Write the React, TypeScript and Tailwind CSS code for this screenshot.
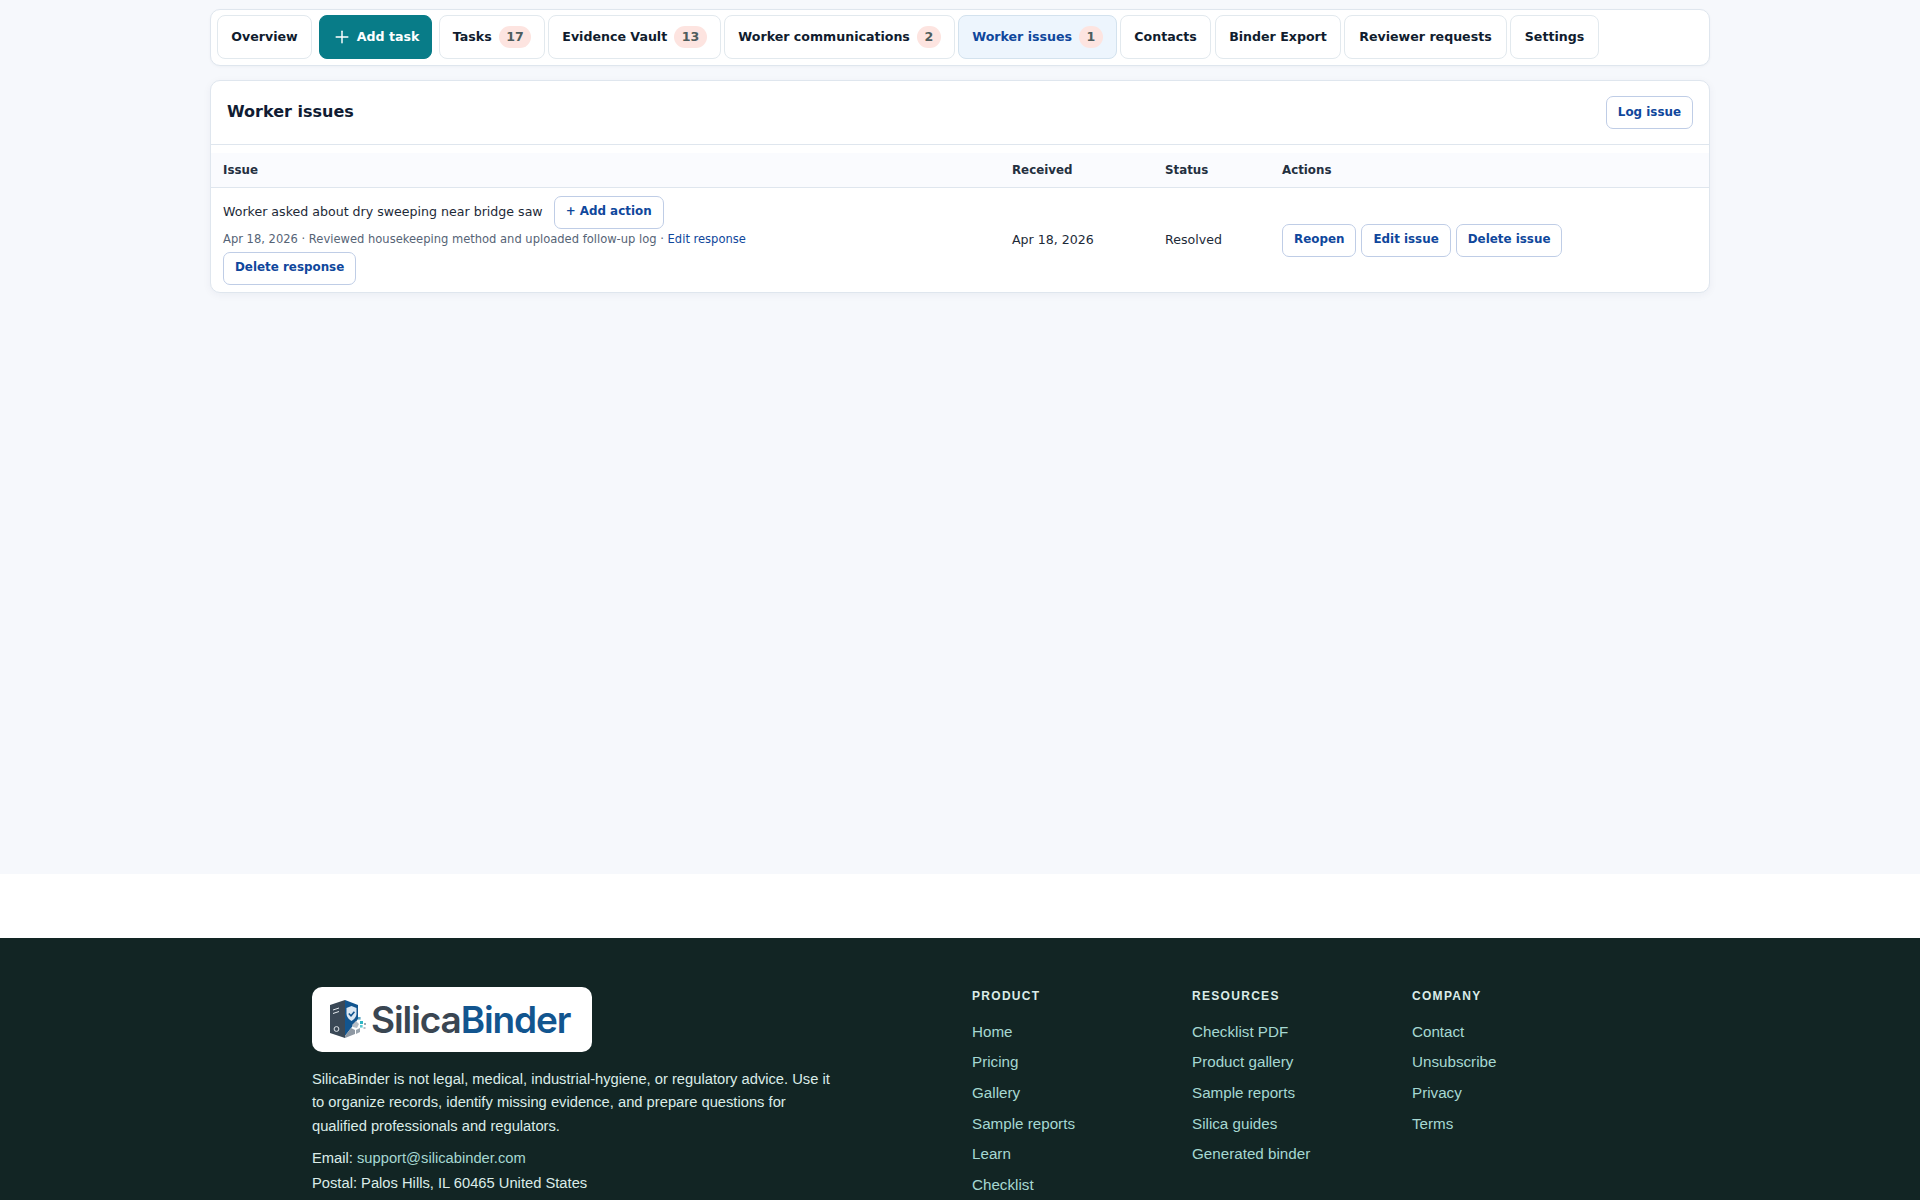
import { Plus } from "lucide-react";

const dejavu = "font-['DejaVu_Sans',sans-serif]";

const tabs = [
  { label: "Overview", w: "w-[95px]", mr: "mr-[7px]" },
  { label: "Add task", w: "w-[113px]", mr: "mr-[7px]", primary: true },
  { label: "Tasks", count: 17, w: "w-[106px]", mr: "mr-[3px]" },
  { label: "Evidence Vault", count: 13, w: "w-[173px]", mr: "mr-[3px]" },
  { label: "Worker communications", count: 2, w: "w-[231px]", mr: "mr-[3px]" },
  { label: "Worker issues", count: 1, w: "w-[159px]", mr: "mr-[3px]", active: true },
  { label: "Contacts", w: "w-[91px]", mr: "mr-[4px]" },
  { label: "Binder Export", w: "w-[126px]", mr: "mr-[3px]" },
  { label: "Reviewer requests", w: "w-[163px]", mr: "mr-[3px]" },
  { label: "Settings", w: "w-[89px]", mr: "" },
];

const footerCols = [
  { title: "PRODUCT", links: ["Home", "Pricing", "Gallery", "Sample reports", "Learn", "Checklist"] },
  { title: "RESOURCES", links: ["Checklist PDF", "Product gallery", "Sample reports", "Silica guides", "Generated binder"] },
  { title: "COMPANY", links: ["Contact", "Unsubscribe", "Privacy", "Terms"] },
];

function OutlineButton({ children, className = "" }: { children: React.ReactNode; className?: string }) {
  return (
    <button className={`h-[33px] px-[11px] rounded-[7px] border border-[#bfcde6] bg-white text-[11.9px] font-bold text-[#0f479c] pb-[1px] whitespace-nowrap ${className}`}>
      {children}
    </button>
  );
}

function LogoMark() {
  return (
    <svg width="36" height="40" viewBox="0 0 36 40" className="shrink-0">
      {/* spine */}
      <path d="M0 5 L15 0 L15 38 L0 33 Z" fill="#3a4856" />
      <path d="M3 10 L9 8 M3 13.5 L9 11.5" stroke="#e6ebf0" strokeWidth="1" />
      <circle cx="6.5" cy="29" r="2.4" fill="none" stroke="#dfe5ea" strokeWidth="1" />
      {/* cover */}
      <path d="M15 0 L28 5 L28 19 L15 36 Z" fill="#12558f" />
      <path d="M21.5 6 L26.5 8 L26.5 13.5 C26.5 17 24 19.5 21.5 21 C19 19.5 16.5 17 16.5 13.5 L16.5 8 Z" fill="#dbe7f2" />
      <path d="M18.8 13.5 L21 15.8 L24.4 11.8" fill="none" stroke="#12558f" strokeWidth="1.6" />
      {/* silica grains */}
      <path d="M15 36 L21 28 L25 30 L25 34 L15 38 Z" fill="#8e98a3" />
      <path d="M22 25 L26 21 L29 24 L27 28 L23 27 Z" fill="#b6bdc5" />
      <path d="M26 30 L30 28 L30 32 L26 34 Z" fill="#9aa4ae" />
      <rect x="28" y="17" width="2.6" height="2.6" fill="#5fa8c4" />
      <rect x="30" y="21" width="3" height="3" fill="#2fb6c4" />
      <rect x="30" y="25" width="2.6" height="2.6" fill="#5cc8d2" />
      <rect x="34" y="23" width="2" height="2" fill="#9fa9b3" />
      <rect x="33.5" y="27" width="2" height="2" fill="#b7bfc7" />
    </svg>
  );
}

export default function App() {
  return (
    <div className="h-[1200px] overflow-hidden bg-white">
      {/* Workspace */}
      <main className={`h-[874px] bg-[#f6f8fc] pt-[9px] ${dejavu}`}>
        <div className="mx-auto w-[1500px]">
          <nav className="h-[57px] rounded-[10px] border border-[#dfe6ee] bg-white flex items-start pt-[5px] pl-[6px] mb-[14px] shadow-[0_1px_3px_rgba(20,40,70,0.04)]">
            {tabs.map((t) => (
              <div
                key={t.label}
                className={`h-[44px] shrink-0 rounded-[8px] border flex items-center justify-center gap-[6px] text-[12.6px] font-bold ${t.w} ${t.mr} ${
                  t.primary
                    ? "bg-[#087c88] border-[#087c88] text-white"
                    : t.active
                      ? "bg-[#edf5fd] border-[#d3e2ee] text-[#0f479c]"
                      : "bg-white border-[#e2e9ee] text-[#101c2e]"
                }`}
              >
                {t.primary && <Plus size={20} strokeWidth={1.75} className="-mr-[1px]" />}
                <span>{t.label}</span>
                {t.count !== undefined && (
                  <span className="min-w-[23px] h-[22px] px-[7.5px] rounded-full bg-[#fde4e0] text-[#4d5c5c] flex items-center justify-center ml-[1px]">
                    {t.count}
                  </span>
                )}
              </div>
            ))}
          </nav>

          <section className="rounded-[10px] border border-[#dfe6ee] bg-white shadow-[0_2px_8px_rgba(20,40,70,0.05)] overflow-hidden">
            <div className="h-[64px] flex items-center justify-between pl-[16px] pr-[16px] border-b border-[#dfe6ee]">
              <h2 className="text-[16px] font-bold text-[#101c33] pb-[2px]">Worker issues</h2>
              <OutlineButton className="pt-[1px] pb-0">Log issue</OutlineButton>
            </div>
            <table className="w-full table-fixed border-collapse mt-[8px]">
              <thead>
                <tr className="h-[34px] bg-[#fafbfe] border-b border-[#dfe6ee] text-left text-[11.84px] font-bold text-[#24303f]">
                  <th className="w-[788px] pl-[12px] pt-[2px]">Issue</th>
                  <th className="w-[153px] pl-[13px] pt-[2px]">Received</th>
                  <th className="w-[117px] pl-[13px] pt-[2px]">Status</th>
                  <th className="pl-[13px] pt-[2px]">Actions</th>
                </tr>
              </thead>
              <tbody>
                <tr className="h-[105px] text-[12.6px] text-[#1d2a38]">
                  <td className="pl-[12px] align-top pt-[8px]">
                    <div className="flex items-center gap-[11px]">
                      <span>Worker asked about dry sweeping near bridge saw</span>
                      <OutlineButton>+ Add action</OutlineButton>
                    </div>
                    <div className="mt-[2px] text-[11.52px] text-[#566476]">
                      Apr 18, 2026 · Reviewed housekeeping method and uploaded follow-up log ·{" "}
                      <a className="text-[#0f479c]">Edit response</a>
                    </div>
                    <OutlineButton className="mt-[4px] block">Delete response</OutlineButton>
                  </td>
                  <td className="pl-[13px] pt-[1px]">Apr 18, 2026</td>
                  <td className="pl-[13px] pt-[1px]">Resolved</td>
                  <td className="pl-[13px] pt-[1px]">
                    <div className="flex gap-[5px]">
                      <OutlineButton>Reopen</OutlineButton>
                      <OutlineButton>Edit issue</OutlineButton>
                      <OutlineButton>Delete issue</OutlineButton>
                    </div>
                  </td>
                </tr>
              </tbody>
            </table>
          </section>
        </div>
      </main>

      {/* Footer */}
      <footer className="mt-[64px] h-[262px] bg-[#122524] font-['Liberation_Sans',Arial,sans-serif] pt-[49px]">
        <div className="ml-[312px] flex">
          <div className="w-[530px] shrink-0 mr-[130px] text-[14.72px] leading-[23.3px] text-[#dbece8]">
            <div className="w-[280px] h-[65px] rounded-[10px] bg-white flex items-center pl-[18px] mb-[16px]">
              <LogoMark />
              <span className="ml-[5px] font-['Inter',sans-serif] font-semibold text-[37px] leading-none tracking-[-1.1px] whitespace-nowrap">
                <span className="text-[#3a4652]">Silica</span>
                <span className="text-[#12558f]">Binder</span>
              </span>
            </div>
            <p>
              SilicaBinder is not legal, medical, industrial-hygiene, or regulatory advice. Use it to organize records,
              identify missing evidence, and prepare questions for qualified professionals and regulators.
            </p>
            <p className="mt-[9px]">
              Email: <a className="text-[#a6d8d2]">support@silicabinder.com</a>
            </p>
            <p className="mt-[2px]">Postal: Palos Hills, IL 60465 United States</p>
          </div>
          {footerCols.map((col) => (
            <div key={col.title} className="w-[220px] shrink-0">
              <h3 className="text-[12px] font-bold tracking-[1.3px] text-[#dbece8] leading-[18px] mb-[16.75px]">{col.title}</h3>
              <ul className="flex flex-col gap-[10.6px]">
                {col.links.map((l) => (
                  <li key={l} className="text-[15.2px] leading-[20px] text-[#a6d8d2]">
                    {l}
                  </li>
                ))}
              </ul>
            </div>
          ))}
        </div>
      </footer>
    </div>
  );
}
